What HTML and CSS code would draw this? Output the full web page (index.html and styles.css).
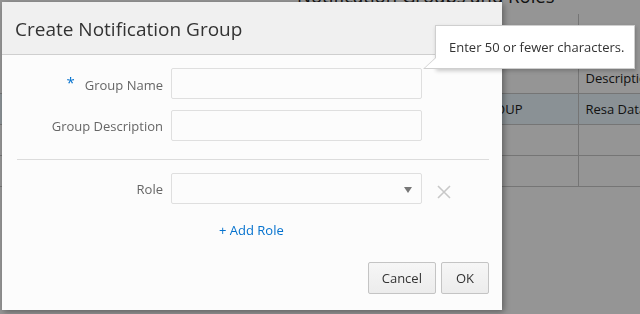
FILE: index.html
```html
<!DOCTYPE html>
<html>

<head>
    <title>Create Notification Group</title>
    <link rel="stylesheet" href="styles.css">
</head>

<body>
    <div class="page">
        <h1 class="page-title">Notification Groups and Roles</h1>
        <table class="grid">
            <tr class="head-top">
                <th></th>
                <th></th>
            </tr>
            <tr class="head">
                <th></th>
                <th>Description</th>
            </tr>
            <tr class="selected">
                <td>NOTIFICATION GROUP</td>
                <td>Resa Data</td>
            </tr>
            <tr>
                <td></td>
                <td></td>
            </tr>
            <tr>
                <td></td>
                <td></td>
            </tr>
        </table>
    </div>

    <div class="overlay"></div>

    <div class="dialog">
        <div class="dialog-header">Create Notification Group</div>
        <div class="dialog-body">
            <div class="form">
                <label class="label"><span class="req">*</span>Group Name</label>
                <input class="field" type="text">
                <span></span>

                <label class="label">Group Description</label>
                <input class="field" type="text">
                <span></span>
            </div>

            <hr class="divider">

            <div class="form">
                <label class="label">Role</label>
                <div class="field select">
                    <span class="caret"></span>
                </div>
                <span class="remove">
                    <svg width="14" height="14" viewBox="0 0 14 14">
                        <path d="M1 1 L13 13 M13 1 L1 13" stroke="#c8c8c8" stroke-width="1.6" fill="none"/>
                    </svg>
                </span>
            </div>

            <div class="add-row"><a class="add-link">+ Add Role</a></div>
        </div>
        <div class="dialog-footer">
            <button class="button">Cancel</button>
            <button class="button ok">OK</button>
        </div>
    </div>

    <div class="tooltip">Enter 50 or fewer characters.</div>
</body>

</html>
```

FILE: styles.css
```css
body {
    margin: 0;
    font-family: "Open Sans", "Noto Sans", sans-serif;
    background: #fff;
    overflow: hidden;
}

.page {
    height: 314px;
    padding-left: 297px;
}

.page-title {
    margin: -17px 0 0;
    font-size: 18.5px;
    font-weight: normal;
    color: #222;
    line-height: 26px;
}

.grid {
    margin-left: -297px;
    margin-top: 5px;
    width: 640px;
    table-layout: fixed;
    border-collapse: collapse;
    font-size: 13px;
    color: #222;
}

.grid td,
.grid th {
    box-sizing: border-box;
    height: 31px;
    padding: 0 7px;
    border-bottom: 1px solid #c8c8c8;
    text-align: left;
    font-weight: normal;
    white-space: nowrap;
    overflow: hidden;
}

.grid td:first-child,
.grid th:first-child {
    width: 578px;
    text-align: right;
    padding-right: 55px;
    border-right: 1px solid #c8c8c8;
}

.grid .head-top th {
    height: 48px;
    border-bottom: none;
}

.grid .head th {
    padding-top: 2px;
}

.grid .selected td {
    background: #ecf9ff;
}

.overlay {
    position: fixed;
    inset: 0;
    background: rgba(0, 0, 0, 0.416);
}

.dialog {
    position: absolute;
    left: 2px;
    top: 2px;
    width: 500px;
    height: 308px;
    background: #fcfcfc;
    box-shadow: 2px 2px 6px rgba(0, 0, 0, 0.35);
    display: flex;
    flex-direction: column;
}

.dialog-header {
    height: 52px;
    padding-left: 13px;
    background: #f0f0f0;
    border-bottom: 1px solid #cfcfcf;
    font-size: 19px;
    line-height: 55px;
    color: #333;
}

.dialog-body {
    flex: 1;
    padding: 13px 13px 0 13px;
}

.form {
    display: grid;
    grid-template-columns: 148px 251px 40px;
    column-gap: 8px;
    row-gap: 11px;
    align-items: center;
}

.label {
    text-align: right;
    font-size: 13px;
    color: #666;
}

.req {
    color: #0572ce;
    font-size: 15px;
    margin-right: 10px;
    position: relative;
    top: -2px;
}

.field {
    box-sizing: border-box;
    height: 31px;
    margin: 0;
    border: 1px solid #dfdfdf;
    border-radius: 2px;
    background: #fcfcfc;
}

.select {
    position: relative;
}

.caret {
    position: absolute;
    right: 9px;
    top: 13px;
    border-left: 4px solid transparent;
    border-right: 4px solid transparent;
    border-top: 6px solid #777;
}

.remove {
    padding-left: 7px;
    height: 14px;
}

.divider {
    margin: 18px 0 13px 2px;
    border: none;
    border-top: 1px solid #dcdcdc;
}

.add-row {
    padding: 14px 0 0 204px;
}

.add-link {
    color: #0572ce;
    font-size: 13px;
}

.dialog-footer {
    display: flex;
    justify-content: flex-end;
    gap: 5px;
    padding: 0 13px 16px;
}

.button {
    height: 32px;
    padding: 0 13px;
    font-family: "Open Sans", "Noto Sans", sans-serif;
    font-size: 13px;
    color: #333;
    background: linear-gradient(#f6f6f6, #ececec);
    border: 1px solid #c4c4c4;
    border-radius: 2px;
}

.button.ok {
    padding: 0 14px;
}

.tooltip {
    position: absolute;
    left: 435px;
    top: 25px;
    width: 200px;
    height: 44px;
    box-sizing: border-box;
    padding-left: 13px;
    background: #fff;
    border: 1px solid #cfcfcf;
    box-shadow: 1px 2px 4px rgba(0, 0, 0, 0.2);
    font-size: 13px;
    line-height: 42px;
    color: #333;
}

.tooltip::before {
    content: "";
    position: absolute;
    left: -13px;
    bottom: -1px;
    border-right: 13px solid #cfcfcf;
    border-top: 12px solid transparent;
}

.tooltip::after {
    content: "";
    position: absolute;
    left: -11px;
    bottom: 0;
    border-right: 11px solid #fff;
    border-top: 10px solid transparent;
}
```
